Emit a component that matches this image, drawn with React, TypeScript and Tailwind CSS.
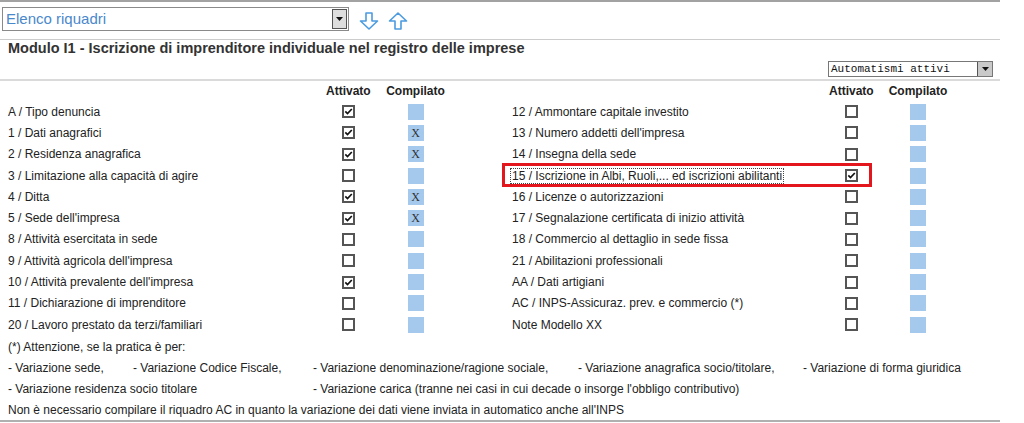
import React from 'react';

type Riquadro = { label: string; attivo: boolean; compilato: boolean; evidenziato?: boolean };

const SINISTRA: Riquadro[] = [
  { label: 'A / Tipo denuncia', attivo: true, compilato: false },
  { label: '1 / Dati anagrafici', attivo: true, compilato: true },
  { label: '2 / Residenza anagrafica', attivo: true, compilato: true },
  { label: '3 / Limitazione alla capacità di agire', attivo: false, compilato: false },
  { label: '4 / Ditta', attivo: true, compilato: true },
  { label: "5 / Sede dell'impresa", attivo: true, compilato: true },
  { label: '8 / Attività esercitata in sede', attivo: false, compilato: false },
  { label: "9 / Attività agricola dell'impresa", attivo: false, compilato: false },
  { label: "10 / Attività prevalente dell'impresa", attivo: true, compilato: false },
  { label: '11 / Dichiarazione di imprenditore', attivo: false, compilato: false },
  { label: '20 / Lavoro prestato da terzi/familiari', attivo: false, compilato: false },
];

const DESTRA: Riquadro[] = [
  { label: '12 / Ammontare capitale investito', attivo: false, compilato: false },
  { label: "13 / Numero addetti dell'impresa", attivo: false, compilato: false },
  { label: '14 / Insegna della sede', attivo: false, compilato: false },
  { label: '15 / Iscrizione in Albi, Ruoli,... ed iscrizioni abilitanti', attivo: true, compilato: false, evidenziato: true },
  { label: '16 / Licenze o autorizzazioni', attivo: false, compilato: false },
  { label: '17 / Segnalazione certificata di inizio attività', attivo: false, compilato: false },
  { label: '18 / Commercio al dettaglio in sede fissa', attivo: false, compilato: false },
  { label: '21 / Abilitazioni professionali', attivo: false, compilato: false },
  { label: 'AA / Dati artigiani', attivo: false, compilato: false },
  { label: 'AC / INPS-Assicuraz. prev. e commercio (*)', attivo: false, compilato: false },
  { label: 'Note Modello XX', attivo: false, compilato: false },
];

function Checkbox({ checked }: { checked: boolean }) {
  return (
    <div className="flex h-[13px] w-[13px] items-center justify-center border-2 border-[#555] bg-white">
      {checked && (
        <svg width="9" height="9" viewBox="0 0 9 9">
          <path d="M1.3 4.4 L3.5 6.6 L7.8 2" fill="none" stroke="#111" strokeWidth="1.7" />
        </svg>
      )}
    </div>
  );
}

function Compilato({ x }: { x: boolean }) {
  return (
    <div className="flex h-[16px] w-[16px] items-center justify-center bg-[#a5c9ec] font-['Liberation_Serif',serif] text-[12px] leading-none text-[#333]">
      {x ? 'X' : ''}
    </div>
  );
}

function Freccia({ su }: { su?: boolean }) {
  return (
    <svg width="20" height="18" viewBox="0 0 20 18" className={su ? 'rotate-180' : ''}>
      <path
        d="M7 1 H13 V9 H18.5 L10 17 L1.5 9 H7 Z"
        fill="white"
        stroke="#4b9be0"
        strokeWidth="1.6"
        strokeLinejoin="round"
      />
    </svg>
  );
}

function Triangolo() {
  return (
    <svg width="7" height="4" viewBox="0 0 7 4">
      <path d="M0 0 H7 L3.5 4 Z" fill="#111" />
    </svg>
  );
}

export default function App() {
  return (
    <div className="h-[423px] w-[1024px] bg-white font-['Liberation_Sans',Arial,sans-serif] text-[12px] text-[#222]">
      <div className="w-[1000px]">
        <div className="h-[2px] bg-[#a2a2a2]" />

        <div className="flex h-[37px] items-start gap-[10px] pl-[2px] pt-[5px]">
          <div className="flex h-[24px] w-[347px] items-center justify-between border border-[#8a8a8a] bg-white pl-[3px] pr-[1px]">
            <span className="text-[15px] text-[#4a88cc]">Elenco riquadri</span>
            <div className="flex h-[20px] w-[15px] items-center justify-center border border-[#555] bg-[#dedede]">
              <Triangolo />
            </div>
          </div>
          <div className="flex gap-[9px] pt-[5px]">
            <Freccia />
            <Freccia su />
          </div>
        </div>

        <div className="h-px bg-[#cccccc]" />

        <div className="h-[17px] pl-[8px] text-[14.5px] font-bold leading-[17px] text-[#333]">
          Modulo I1 - Iscrizione di imprenditore individuale nel registro delle imprese
        </div>

        <div className="flex h-[22px] items-start justify-end pr-[7px] pt-[4px]">
          <div className="flex h-[16px] w-[165px] items-center justify-between border border-[#777] bg-white pl-[2px]">
            <span className="font-['Liberation_Mono',monospace] text-[11px] leading-none text-[#111]">
              Automatismi attivi
            </span>
            <div className="flex h-[14px] w-[15px] items-center justify-center border-l border-[#555] bg-[#c9c9c9]">
              <Triangolo />
            </div>
          </div>
        </div>

        <div className="h-[2px] bg-[#dadada]" />

        <div className="flex h-[20px] items-center font-bold">
          <div className="w-[326px]" />
          <div className="w-[44px] text-center">Attivato</div>
          <div className="w-[91px] text-center">Compilato</div>
          <div className="w-[41px]" />
          <div className="w-[327px]" />
          <div className="w-[44px] text-center">Attivato</div>
          <div className="w-[90px] text-center">Compilato</div>
        </div>

        {SINISTRA.map((s, i) => {
          const d = DESTRA[i];
          return (
            <div key={s.label} className="flex h-[21.3px] items-center">
              <div className="w-[326px] pl-[8px]">{s.label}</div>
              <div className="flex w-[44px] justify-center">
                <Checkbox checked={s.attivo} />
              </div>
              <div className="flex w-[91px] justify-center">
                <Compilato x={s.compilato} />
              </div>
              <div className="w-[41px]" />
              <div className="relative flex h-full items-center">
                <div className="w-[327px] pl-[10px]">
                  {d.evidenziato ? (
                    <span className="-ml-px px-px outline-1 outline-dotted outline-[#444]">{d.label}</span>
                  ) : (
                    d.label
                  )}
                </div>
                <div className="flex w-[44px] justify-center">
                  <Checkbox checked={d.attivo} />
                </div>
                {d.evidenziato && (
                  <div className="pointer-events-none absolute -bottom-px -top-[2px] left-0 right-[1px] border-[3px] border-[#e3161e]" />
                )}
              </div>
              <div className="flex w-[90px] justify-center">
                <Compilato x={d.compilato} />
              </div>
            </div>
          );
        })}

        <div className="pl-[8px] pt-[1px]">
          <div className="flex h-[21px] items-center">(*) Attenzione, se la pratica è per:</div>
          <div className="flex h-[21px] items-center">
            <span className="w-[125px] shrink-0">- Variazione sede,</span>
            <span className="w-[180px] shrink-0">- Variazione Codice Fiscale,</span>
            <span className="w-[265px] shrink-0">- Variazione denominazione/ragione sociale,</span>
            <span className="w-[225px] shrink-0">- Variazione anagrafica socio/titolare,</span>
            <span>- Variazione di forma giuridica</span>
          </div>
          <div className="flex h-[21px] items-center">
            <span className="w-[305px] shrink-0">- Variazione residenza socio titolare</span>
            <span>- Variazione carica (tranne nei casi in cui decade o insorge l'obbligo contributivo)</span>
          </div>
          <div className="flex h-[21px] items-center">
            Non è necessario compilare il riquadro AC in quanto la variazione dei dati viene inviata in automatico anche all'INPS
          </div>
        </div>

        <div className="h-[2px] bg-[#b0b0b0]" />
      </div>
    </div>
  );
}
